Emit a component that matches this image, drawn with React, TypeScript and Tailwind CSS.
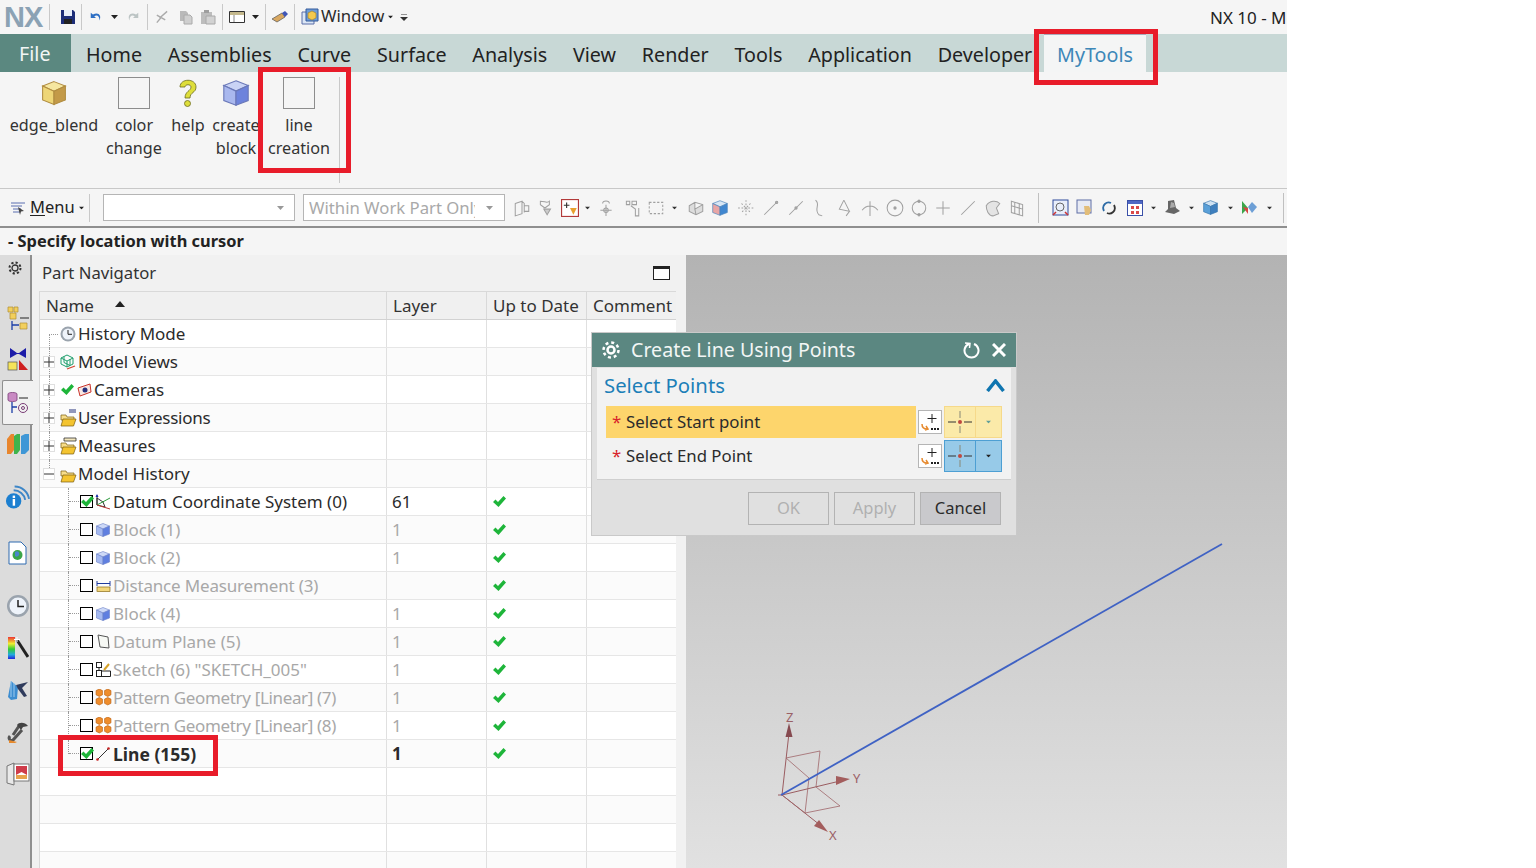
import React from "react";

const font = { fontFamily: '"Noto Sans","Open Sans",sans-serif' };

function Cube({ top = "#c9d3f5", left = "#a9b8ee", right = "#6d83dc", stroke = "#6a78b8", size = 16 }: any) {
  return (
    <svg width={size} height={size} viewBox="0 0 16 16" className="shrink-0">
      <path d="M8 1.5 14.5 4 8 7 1.5 4Z" fill={top} stroke={stroke} strokeWidth=".6" />
      <path d="M1.5 4 8 7v7.5L1.5 12Z" fill={left} stroke={stroke} strokeWidth=".6" />
      <path d="M14.5 4 8 7v7.5l6.500-2.500Z" fill={right} stroke={stroke} strokeWidth=".6" />
    </svg>
  );
}

function Caret({ className = "", color = "#222" }: { className?: string; color?: string }) {
  return (
    <svg width="7" height="4" viewBox="0 0 7 4" className={"shrink-0 " + className}>
      <path d="M0 0h7L3.500 4Z" fill={color} />
    </svg>
  );
}

function QuickSep({ className = "" }: { className?: string }) {
  return <div className={"w-px h-[26px] bg-[#c9c9c9] shrink-0 " + className} />;
}

function TitleBar() {
  return (
    <div className="h-[34px] flex items-center pl-[4px] relative">
      <span className="text-[29px] font-bold text-[#8ba2b4] leading-none w-[45px] tracking-[-1px]" style={{ fontFamily: '"Liberation Sans",sans-serif' }}>NX</span>
      <QuickSep />
      <svg width="16" height="16" viewBox="0 0 16 16" className="ml-[10px] shrink-0">
        <path d="M1 1h12l2 2v12H1Z" fill="#1d2d78" />
        <path d="M4 1h8v6H4Z" fill="#e8eef8" />
        <path d="M4 10h8v5H4Z" fill="#222" />
      </svg>
      <QuickSep className="ml-[5px]" />
      <svg width="14" height="16" viewBox="0 0 16 16" className="ml-[7px] shrink-0">
        <path d="M2 3v6h6L6 7c3-2 6-.500 6 5 2.500-6-1-10-7.500-7Z" fill="#2d6fc4" />
      </svg>
      <Caret className="ml-[8px]" />
      <svg width="14" height="16" viewBox="0 0 16 16" className="ml-[8px] shrink-0">
        <path d="M14 3v6H8l2-2c-3-2-6-.500-6 5-2.500-6 1-10 7.500-7Z" fill="#bcc4c4" />
      </svg>
      <QuickSep className="ml-[7px]" />
      <svg width="15" height="16" viewBox="0 0 16 16" className="ml-[6px] shrink-0">
        <path d="M14 2 6 9M3 14 8 8M3 6l9 5" stroke="#aaa" strokeWidth="1.500" fill="none" />
      </svg>
      <svg width="15" height="15" viewBox="0 0 15 15" className="ml-[9px] shrink-0">
        <path d="M2 1h6l2 2v8H2Z" fill="#b9b9b9" />
        <path d="M6 5h6l2 2v7H6Z" fill="#cfcfcf" stroke="#aaa" />
      </svg>
      <svg width="16" height="16" viewBox="0 0 16 16" className="ml-[7px] shrink-0">
        <path d="M1 3h11v12H1Z" fill="#bdbdbd" />
        <path d="M4 1h5v3H4Z" fill="#9e9e9e" />
        <path d="M6 7h9v8H6Z" fill="#d2d2d2" stroke="#a8a8a8" />
      </svg>
      <QuickSep className="ml-[6px]" />
      <svg width="16" height="14" viewBox="0 0 16 14" className="ml-[6px] shrink-0">
        <path d="M.500 1.500h15v11H.500Z" fill="#fff" stroke="#333" />
        <path d="M1 2h14v3H1Z" fill="#c5b98d" />
        <path d="M5 5v7" stroke="#888" />
      </svg>
      <Caret className="ml-[7px]" />
      <QuickSep className="ml-[6px]" />
      <svg width="18" height="14" viewBox="0 0 18 14" className="ml-[5px] shrink-0">
        <path d="M1 9 11 3l3 4-8 5Z" fill="#d9a860" stroke="#555" strokeWidth=".7" />
        <path d="M11 3l3-2 3 3-3 3Z" fill="#3f55b5" />
      </svg>
      <QuickSep className="ml-[5px]" />
      <svg width="18" height="20" viewBox="0 0 18 20" className="ml-[6px] shrink-0">
        <path d="M1 5h12v12H1Z" fill="#dbe6f5" stroke="#5a6fa8" />
        <path d="M5 2h12v12H5Z" fill="#6d9cd8" stroke="#345a9a" />
        <path d="M7 6l4-2 4 2v5l-4 2-4-2Z" fill="#f3c94e" stroke="#a07c20" strokeWidth=".6" />
      </svg>
      <span className="text-[16.700px] text-[#2b2b2b] ml-[2px] leading-none pb-[2px]">Window</span>
      <Caret className="ml-[3px] scale-75" />
      <svg width="8" height="7" viewBox="0 0 8 7" className="ml-[6px]">
        <path d="M1 0h6" stroke="#333" />
        <path d="M0 3h8L4 7Z" fill="#333" />
      </svg>
      <span className="absolute left-[1210px] top-[5px] text-[17px] text-[#222] w-[77px] overflow-hidden whitespace-nowrap">NX 10 - Modeling</span>
    </div>
  );
}

const tabs = ["Home", "Assemblies", "Curve", "Surface", "Analysis", "View", "Render", "Tools", "Application", "Developer"];

function TabBar() {
  return (
    <div className="h-[38px] bg-[#c8d8d6] flex items-stretch">
      <div className="w-[71px] bg-[#5b8880] text-[#f2f6f5] text-[19.700px] flex items-center pl-[19px] pt-[1px]">File</div>
      <div className="w-[973px] flex gap-[25.800px] pl-[15px] text-[19.700px] text-[#222] items-center pt-[3px] whitespace-nowrap">
        {tabs.map((t) => (
          <span key={t} className="leading-none">{t}</span>
        ))}
      </div>
      <div className="w-[102px] bg-[#f4f5f5] border-t border-[#aab] text-[#3d87b8] text-[19.700px] flex items-center justify-center pt-[2px]">MyTools</div>
    </div>
  );
}

function RibbonItem({ w, icon, lines }: { w: number; icon: React.ReactNode; lines: string[] }) {
  return (
    <div className="flex flex-col items-center shrink-0" style={{ width: w }}>
      <div className="h-[32px] flex items-center justify-center mt-[5px]">{icon}</div>
      <div className="text-[16.200px] leading-[23px] text-[#333] mt-[5px] text-center whitespace-nowrap">
        {lines.map((l) => (
          <div key={l}>{l}</div>
        ))}
      </div>
    </div>
  );
}

function EmptyIcon() {
  return <div className="w-[32px] h-[32px] border border-[#8d8d8d] bg-[#f5f5f5]" />;
}

function Ribbon() {
  return (
    <div className="h-[117px] flex pl-[8px] relative border-b border-[#c8c8c8]">
      <RibbonItem w={92} lines={["edge_blend"]} icon={<Cube size={28} top="#f6e7a0" left="#eed677" right="#c39a48" stroke="#b08c40" />} />
      <RibbonItem w={68} lines={["color", "change"]} icon={<EmptyIcon />} />
      <RibbonItem w={40} lines={["help"]} icon={
        <svg width="20" height="30" viewBox="0 0 20 30">
          <path d="M2 9C2 0 18 0 18 9c0 6-6 5-6 11H7c0-7 6-7 6-11 0-3-6-3-6 0Z" fill="#dede3a" stroke="#6b6b20" strokeWidth=".8" />
          <circle cx="9.500" cy="25.500" r="3" fill="#dede3a" stroke="#6b6b20" strokeWidth=".8" />
        </svg>
      } />
      <RibbonItem w={56} lines={["create", "block"]} icon={<Cube size={30} />} />
      <div className="w-[5px]" />
      <RibbonItem w={60} lines={["line", "creation"]} icon={<EmptyIcon />} />
      <div className="w-px h-[106px] bg-[#c9c9c9] mt-[5px] ml-[10px]" />
    </div>
  );
}

function G({ children, w = 24 }: { children: React.ReactNode; w?: number }) {
  return (
    <div className="shrink-0 flex justify-center items-center" style={{ width: w }}>
      <svg width="18" height="18" viewBox="0 0 16 16" fill="none" stroke="#a0a0a0" strokeWidth=".9" className="shrink-0">{children}</svg>
    </div>
  );
}

function Drop({ w = 14 }: { w?: number }) {
  return (
    <div className="shrink-0 flex justify-center" style={{ width: w }}>
      <Caret color="#333" className="scale-75" />
    </div>
  );
}

function Toolbar() {
  return (
    <div className="h-[39px] flex items-center border-b-2 border-[#8f8f8f]">
      <div className="flex items-center w-[89px] pl-[10px]">
        <svg width="16" height="16" viewBox="0 0 16 16">
          <path d="M1 3h14M1 6h11M3 9h8M3 12h7" stroke="#5a6fb0" />
          <path d="M8 7l6 4-3 .500L10 15Z" fill="#444" />
        </svg>
        <span className="text-[16.500px] ml-[4px] text-[#222]"><span className="underline underline-offset-2">M</span>enu</span>
        <Caret className="ml-[3px] scale-75" />
      </div>
      <div className="w-px h-[28px] bg-[#c9c9c9]" />
      <div className="ml-[13px] w-[192px] h-[27px] border border-[#b5b5b5] bg-white flex items-center justify-end pr-[10px]">
        <Caret color="#999" />
      </div>
      <div className="ml-[8px] w-[202px] h-[27px] border border-[#b5b5b5] bg-white flex items-center pl-[5px] pr-[11px]">
        <span className="text-[16.700px] text-[#a9a9a9] w-[166px] overflow-hidden whitespace-nowrap">Within Work Part Only</span>
        <Caret color="#999" className="ml-auto" />
      </div>
      <div className="flex items-center ml-[5px]">
        <G w={24}><path d="M2 4l6-2v11l-6 2ZM8 2l2 2v8M10 6h4v5h-4" /></G>
        <G w={24}><path d="M3 2c4 0 6 2 8 0v3l-4 3-4-3Z" /><path d="M6 9h6l-3 5Z" fill="#ccc" /></G>
        <div className="w-[24px] flex justify-center">
          <svg width="18" height="18" viewBox="0 0 16 16">
            <rect x=".5" y=".5" width="15" height="15" fill="#fff" stroke="#b23a3a" />
            <path d="M5 3v5M2.500 5.500h5" stroke="#333" />
            <path d="M8 8h6l-3 6Z" fill="#e9a12f" />
          </svg>
        </div>
        <Drop w={10} />
        <G w={28}><path d="M8 5v10M3 10h10M5 4c0-3 6-3 6 0" /><circle cx="8" cy="10" r="2" /></G>
        <G w={24}><path d="M3 2h3v3H3ZM8 2h4v3H8ZM7 6l4 3v6h3V8" /></G>
        <G w={24}><path d="M2 3h12v10H2Z" strokeDasharray="2 1.500" /></G>
        <Drop w={12} />
        <G w={32}><path d="M2 6l5-3 7 2v6l-6 3-6-3ZM7 3v6l7-4M7 9l1 5" fill="#ddd" /></G>
        <div className="w-[16px] flex justify-center"><Cube size={18} top="#d8e6f4" left="#e8a5a5" right="#3f86cf" stroke="#4b83bb" /></div>
        <G w={36}><path d="M8 1v14M1 8h14" strokeDasharray="1.500 1.500" /><path d="M4 4l8 8M12 4l-8 8" strokeDasharray="1.500 1.500" /></G>
        <G w={14}><path d="M2 14 14 2" /><circle cx="13" cy="3" r="1" fill="#aaa" /></G>
        <G w={36}><path d="M2 14 14 2" /><circle cx="8" cy="8" r="1" fill="#aaa" /></G>
        <G w={12}><path d="M4 1c5 4-2 8 3 13l3 1" /></G>
        <G w={38}><path d="M7 1 3 9l9 2-3 4M7 1l5 10" /></G>
        <G w={12}><path d="M8 2v13M1 10c4-5 10-5 14 0" /></G>
        <G w={38}><circle cx="8" cy="8" r="7" /><circle cx="8" cy="8" r="1" fill="#999" /></G>
        <G w={10}><circle cx="8" cy="8" r="6" /><circle cx="8" cy="2" r="1" fill="#999" /><circle cx="8" cy="14" r="1" fill="#999" /></G>
        <G w={38}><path d="M8 2v12M2 8h12" /></G>
        <G w={12}><path d="M2 14 14 2" /></G>
        <G w={38}><path d="M2 6c3-5 9-5 12-2l-3 4 2 5-5 2c-4 0-6-5-6-9Z" fill="#e4e4e4" /></G>
        <G w={10}><path d="M3 2l10 3v10L3 12ZM6 3v10M10 4v10M3 6l10 3" /></G>
      </div>
      <div className="w-px h-[30px] bg-[#c0c0c0] ml-[16px]" />
      <div className="flex items-center ml-[8px] pl-[1px]">
        <div className="w-[24px] flex justify-center">
          <svg width="17" height="17" viewBox="0 0 17 17">
            <rect x="1" y="1" width="15" height="15" fill="#e8eefb" stroke="#2e4a9c" />
            <circle cx="8" cy="8" r="4" fill="none" stroke="#666" />
            <path d="M1 16l3-3M16 16l-3-3" stroke="#c33" strokeWidth="1.500" />
          </svg>
        </div>
        <div className="w-[24px] flex justify-center">
          <svg width="17" height="17" viewBox="0 0 17 17">
            <rect x="1" y="1" width="14" height="13" fill="#e7eaf4" stroke="#5f6ea5" />
            <path d="M8 7h5l2 4-2 5H9Z" fill="#e2bd79" />
          </svg>
        </div>
        <div className="w-[26px] flex justify-center">
          <svg width="16" height="16" viewBox="0 0 16 16" fill="none" strokeWidth="1.800">
            <path d="M3 11c-3-6 3-10 7-8" stroke="#2d6ba6" />
            <path d="M13 5c3 6-3 10-7 8" stroke="#333" />
          </svg>
        </div>
        <div className="w-[26px] flex justify-center">
          <svg width="16" height="16" viewBox="0 0 16 16">
            <rect x=".5" y=".5" width="15" height="15" fill="#fff" stroke="#3a50a8" />
            <path d="M1 1h14v3H1Z" fill="#4f68c4" />
            <path d="M4 6h3v3H4ZM9 6h3v3H9ZM4 11h3v3H4ZM9 11h3v3H9Z" fill="#d94a4a" />
          </svg>
        </div>
        <Drop w={10} />
        <div className="w-[29px] flex justify-center">
          <svg width="17" height="17" viewBox="0 0 17 17">
            <path d="M4 2 10 1l2 8 4 3-6 3-9-2 3-3Z" fill="#666" />
            <path d="M7 3l3 1 1 4-5 1Z" fill="#aaa" />
          </svg>
        </div>
        <Drop w={8} />
        <div className="w-[31px] flex justify-center"><Cube top="#cfe2f2" left="#5aa0d8" right="#3e7fbe" stroke="#3674ab" size={17} /></div>
        <Drop w={8} />
        <div className="w-[31px] flex justify-center">
          <svg width="17" height="15" viewBox="0 0 17 15">
            <path d="M1 1v13l6-6Z" fill="#3ba64a" />
            <path d="M2 7l5 7V8Z" fill="#d64545" />
            <path d="M11 2 16 7l-5 6-4-6Z" fill="#6d9fd6" />
          </svg>
        </div>
        <Drop w={8} />
      </div>
      <div className="w-px h-[30px] bg-[#c0c0c0] ml-[10px]" />
    </div>
  );
}

function Slot({ h, children, sel }: { h: number; children: React.ReactNode; sel?: boolean }) {
  return (
    <div
      className={sel
        ? "w-[31px] ml-[2px] -mr-px bg-[#f1f1f1] border border-r-0 border-[#8f8f8f] rounded-l-[2px] flex items-center justify-center shrink-0 relative z-10"
        : "flex items-center justify-center shrink-0 pl-[5px]"}
      style={{ height: h }}
    >
      {children}
    </div>
  );
}

function Rail() {
  return (
    <div className="w-[32px] shrink-0 bg-[#dcdcdc] border-r-[2px] border-[#8f8f8f] flex flex-col">
      <div className="h-[26px] flex items-center justify-center shrink-0">
        <svg width="14" height="14" viewBox="0 0 14 14" fill="none" stroke="#333" strokeWidth="1.300">
          <circle cx="7" cy="7" r="3" />
          <circle cx="7" cy="7" r="5.500" strokeDasharray="2.200 2.100" strokeWidth="2" />
        </svg>
      </div>
      <div className="h-[15px] shrink-0" />
      <Slot h={44}>
        <svg width="24" height="26" viewBox="0 0 24 26">
          <path d="M2 2h5v5H2ZM8 2h4v5H8ZM4 8h6v6H4Z" fill="#f2cf5c" stroke="#b08c30" strokeWidth=".7" />
          <path d="M6 16v9M6 20h7" stroke="#1d3fa8" strokeWidth="1.300" />
          <path d="M14 18h7v6h-7Z" fill="#f2cf5c" stroke="#b08c30" strokeWidth=".7" />
          <path d="M14 13h9" stroke="#222" />
        </svg>
      </Slot>
      <Slot h={40}>
        <svg width="22" height="24" viewBox="0 0 22 24">
          <path d="M3 0l7 5 2 0 7-5v10l-7-4h-2l-7 4Z" fill="#1c1ca8" />
          <rect x="1" y="14" width="9" height="8" fill="#f5e45a" stroke="#555" strokeWidth=".7" />
          <path d="M12 22V12l9 10Z" fill="#cf1f1f" />
        </svg>
      </Slot>
      <Slot h={45} sel>
        <svg width="22" height="24" viewBox="0 0 22 24" fill="none">
          <path d="M1 3c0-2 9-2 9 0v6c0 2-9 2-9 0Z" fill="#c98ac3" stroke="#7a3d77" strokeWidth=".8" />
          <path d="M5 11v11M5 16h5" stroke="#1d3fa8" strokeWidth="1.300" />
          <circle cx="16" cy="17" r="4.500" stroke="#7a3d77" />
          <circle cx="16" cy="17" r="1.500" stroke="#7a3d77" />
          <path d="M12 7h9" stroke="#222" />
        </svg>
      </Slot>
      <Slot h={38}>
        <svg width="24" height="22" viewBox="0 0 24 22">
          <path d="M1 6 5 1h3v16l-3 4H1Z" fill="#e8862e" />
          <path d="M8 3l3-2h3v16l-3 4H8Z" fill="#3fb44c" />
          <path d="M15 3l4-2h4v16l-4 4h-4Z" fill="#3f97d6" />
        </svg>
      </Slot>
      <Slot h={70}>
        <svg width="26" height="26" viewBox="0 0 26 26">
          <circle cx="9" cy="16" r="8" fill="#1c7fd0" />
          <rect x="8" y="14" width="2.500" height="7" fill="#fff" />
          <rect x="8" y="10.500" width="2.500" height="2.500" fill="#fff" />
          <path d="M9 5c6 0 11 4 12 10M10 1c8 0 14 6 15 13" stroke="#3d86c7" strokeWidth="2" fill="none" />
        </svg>
      </Slot>
      <Slot h={40}>
        <svg width="20" height="24" viewBox="0 0 20 24">
          <path d="M1 1h12l5 5v17H1Z" fill="#fff" stroke="#2e6bb0" />
          <circle cx="9.500" cy="14" r="5" fill="#3aa548" />
          <path d="M7 11c3-2 5 1 4 3s-3 2-4 1" fill="#4a86cc" />
        </svg>
      </Slot>
      <div className="h-[12px] shrink-0" />
      <Slot h={42}>
        <svg width="24" height="24" viewBox="0 0 24 24">
          <circle cx="12" cy="12" r="11" fill="#9aa3ad" />
          <circle cx="12" cy="12" r="8.500" fill="#eef3fa" />
          <path d="M12 6v6.500h6" stroke="#222" strokeWidth="1.500" fill="none" />
        </svg>
      </Slot>
      <Slot h={42}>
        <svg width="22" height="24" viewBox="0 0 22 24">
          <defs>
            <linearGradient id="rb" x1="0" x2="0" y1="0" y2="1">
              <stop offset="0" stopColor="#e33" />
              <stop offset=".3" stopColor="#ee3" />
              <stop offset=".55" stopColor="#3c3" />
              <stop offset=".8" stopColor="#2ad" />
              <stop offset="1" stopColor="#22d" />
            </linearGradient>
          </defs>
          <rect x="1" y="1" width="7" height="22" fill="url(#rb)" />
          <path d="M10 4 21 21" stroke="#222" strokeWidth="3" />
          <path d="M10 1v5M7 3.500h6" stroke="#fff" />
        </svg>
      </Slot>
      <Slot h={42}>
        <svg width="24" height="22" viewBox="0 0 24 22">
          <path d="M5 2 2 18l3 3 6-1 1-12Z" fill="#3d8dd0" />
          <path d="M5 2v16M8 4v14" stroke="#9ecbef" />
          <path d="M10 6l12-3-6 6 5 8-3 1-6-8Z" fill="#2f3b5c" />
        </svg>
      </Slot>
      <Slot h={42}>
        <svg width="22" height="24" viewBox="0 0 22 24">
          <path d="M12 6l-6 9M3 16c-2 2 0 6 3 4l9-10" stroke="#555" strokeWidth="3" fill="none" />
          <path d="M10 5c2-3 8-3 11 1l-5 1-2 3Z" fill="#444" />
          <path d="M2 20l8 2-2 1H2Z" fill="#e68a2e" />
        </svg>
      </Slot>
      <Slot h={42}>
        <svg width="24" height="24" viewBox="0 0 24 24">
          <path d="M1 4l7-3v22l-7-2Z" fill="#e9e9e9" stroke="#777" />
          <rect x="8" y="2" width="15" height="17" fill="#fff" stroke="#777" />
          <path d="M10 4h11v9l-5.500-3L10 13Z" fill="#cf3c4a" />
          <path d="M10 13h11v4H10Z" fill="#e7a24c" />
        </svg>
      </Slot>
    </div>
  );
}

function Check({ className = "" }: { className?: string }) {
  return (
    <svg width="13" height="13" viewBox="0 0 13 13" className={"shrink-0 " + className}>
      <path d="M0 7l2.500-2.500 2.500 2.500L10.500 1 13 3.500l-7.500 8.500Z" fill="#1eb53a" />
    </svg>
  );
}

function CheckBox({ on }: { on?: boolean }) {
  return (
    <div className="w-[13px] h-[13px] border border-black bg-white shrink-0 relative">
      {on && <Check className="absolute left-0 top-[-1px]" />}
    </div>
  );
}

const Folder = ({ top }: { top?: "lines" | "ruler" }) => (
  <svg width="17" height="18" viewBox="0 0 17 18" className="shrink-0">
    {top === "lines" && <path d="M9 1h7M9 3h7" stroke="#26327d" />}
    {top === "ruler" && <path d="M4 1h12v3H4Z" fill="#f3e7bd" stroke="#333" strokeWidth=".8" />}
    <path d="M1 6h5l1 2h7v3H1Z" fill="#f7dd8a" stroke="#7a5b10" strokeWidth=".7" />
    <path d="M1 17 3 10h13l-2.500 7Z" fill="#f4c430" stroke="#7a5b10" strokeWidth=".7" />
  </svg>
);

const BlockIco = () => <Cube size={16} top="#cdd9f7" left="#a5b9f0" right="#5f7fe0" stroke="#6a7fc8" />;

const Orange = () => (
  <svg width="17" height="17" viewBox="0 0 16 16" className="shrink-0">
    {[[1, 0], [9, 0], [1, 8], [9, 8]].map(([x, y], i) => (
      <path key={i} d={`M${x + 3} ${y}l3 1.500v4l-3 1.500-3-1.500v-4Z`} fill="#ef8d2c" stroke="#b85e10" strokeWidth=".6" />
    ))}
  </svg>
);

const CoordIco = () => (
  <svg width="18" height="16" viewBox="0 0 18 16" fill="none" className="shrink-0">
    <path d="M3 1v10M3 4l6 4 2 5-8-2Z" stroke="#333" />
    <path d="M3 11 16 4" stroke="#2a9a3a" />
    <path d="M3 11l13 4" stroke="#b33" />
    <path d="M3 0l1.500 3h-3Z" fill="#1b2fb0" />
  </svg>
);

const ClockIco = () => (
  <svg width="16" height="16" viewBox="0 0 16 16" className="shrink-0">
    <circle cx="8" cy="8" r="7.500" fill="#9aa3ad" />
    <circle cx="8" cy="8" r="5.500" fill="#eef3fa" />
    <path d="M8 4v4.300h4" stroke="#222" fill="none" />
  </svg>
);

const ViewsIco = () => (
  <svg width="16" height="16" viewBox="0 0 16 16" fill="none" className="shrink-0">
    <path d="M7 1l6 3v6l-6 3-6-3V4Z M1 4l6 3 6-3M7 7v6M4 2.500v6l6 3V5" stroke="#1e9e6c" />
    <path d="M7 15l8-3" stroke="#d2452f" strokeWidth="1.300" />
  </svg>
);

const CamIco = () => (
  <svg width="15" height="14" viewBox="0 0 15 14" fill="none" className="shrink-0">
    <path d="M1 5 13 1l1 8-11 4Z" fill="#f9e8e4" stroke="#c9332a" />
    <circle cx="8" cy="7" r="2.500" fill="#26327d" />
  </svg>
);

const MeasureIco = () => (
  <svg width="15" height="12" viewBox="0 0 15 12" fill="none" className="shrink-0">
    <path d="M1 1v5M14 1v5M1 3.500h13" stroke="#1f3b9e" />
    <rect x="1" y="7" width="13" height="4.500" fill="#f3d77c" stroke="#8b6b18" strokeWidth=".7" />
  </svg>
);

const PlaneIco = () => (
  <svg width="13" height="15" viewBox="0 0 13 15" className="shrink-0">
    <path d="M1 1l10 2 1 11-9-1Z" fill="#f7f9f5" stroke="#555" />
  </svg>
);

const SketchIco = () => (
  <svg width="15" height="15" viewBox="0 0 15 15" fill="none" className="shrink-0">
    <rect x=".5" y=".5" width="5" height="5" stroke="#222" />
    <rect x=".5" y="8.500" width="5" height="6" stroke="#222" />
    <path d="M5.500 9h9v5.500h-9M3 5.500v3" stroke="#222" />
    <path d="M8 8l5-6" stroke="#d7a32a" strokeWidth="2" />
  </svg>
);

const LineIco = () => (
  <svg width="14" height="14" viewBox="0 0 14 14" className="shrink-0">
    <path d="M1 13 13 1" stroke="#333" />
    <circle cx="1.500" cy="12.500" r="1.300" fill="#c62020" />
    <circle cx="12.500" cy="1.500" r="1.300" fill="#c62020" />
  </svg>
);

type Row = {
  label?: string;
  labelClass?: string;
  expander?: "+" | "-";
  check?: boolean;
  box?: boolean | null;
  icon?: React.ReactNode;
  layer?: string;
  ok?: boolean;
  dim?: boolean;
  bold?: boolean;
  child?: boolean;
  last?: boolean;
};

const rows: Row[] = [
  { label: "History Mode", icon: <ClockIco /> },
  { label: "Model Views", expander: "+", icon: <ViewsIco /> },
  { label: "Cameras", expander: "+", check: true, icon: <CamIco /> },
  { label: "User Expressions", labelClass: "tracking-[-0.25px]", expander: "+", icon: <Folder top="lines" /> },
  { label: "Measures", expander: "+", icon: <Folder top="ruler" /> },
  { label: "Model History", expander: "-", icon: <Folder /> },
  { label: "Datum Coordinate System (0)", child: true, box: true, icon: <CoordIco />, layer: "61", ok: true },
  { label: "Block (1)", child: true, box: false, icon: <BlockIco />, layer: "1", ok: true, dim: true },
  { label: "Block (2)", child: true, box: false, icon: <BlockIco />, layer: "1", ok: true, dim: true },
  { label: "Distance Measurement (3)", labelClass: "tracking-[-0.17px]", child: true, box: false, icon: <MeasureIco />, ok: true, dim: true },
  { label: "Block (4)", child: true, box: false, icon: <BlockIco />, layer: "1", ok: true, dim: true },
  { label: "Datum Plane (5)", child: true, box: false, icon: <PlaneIco />, layer: "1", ok: true, dim: true },
  { label: 'Sketch (6) "SKETCH_005"', child: true, box: false, icon: <SketchIco />, layer: "1", ok: true, dim: true },
  { label: "Pattern Geometry [Linear] (7)", labelClass: "tracking-[-0.35px]", child: true, box: false, icon: <Orange />, layer: "1", ok: true, dim: true },
  { label: "Pattern Geometry [Linear] (8)", labelClass: "tracking-[-0.35px]", child: true, box: false, icon: <Orange />, layer: "1", ok: true, dim: true },
  { label: "Line (155)", child: true, box: true, icon: <LineIco />, layer: "1", ok: true, bold: true, last: true },
  {},
  {},
  {},
  {},
];

function TreeRow({ r, index }: { r: Row; index: number }) {
  const color = r.dim ? "text-[#a8a8a8]" : "text-[#2b2b2b]";
  const odd = index % 2 === 1;
  const weight = r.bold ? " font-bold" : "";
  return (
    <div className={"h-[28px] flex border-b border-[#e6e6e6] shrink-0 " + (odd ? "bg-[#fbfbfb]" : "bg-white")}>
      <div className={"w-[347px] border-r border-[#e0e0e0] flex items-center relative whitespace-nowrap " + color + weight + (r.bold ? " text-[17.500px]" : " text-[17px]")}>
        {r.label && !r.child && index < 6 && (
          <span className={"absolute left-[9px] w-px border-l border-dotted border-[#999] " + (index === 0 ? "top-[14px] bottom-[-1px]" : index === 5 ? "top-0 h-[14px]" : "top-0 bottom-[-1px]")} />
        )}
        {r.child && (
          <span className={"absolute left-[28px] w-px border-l border-dotted border-[#999] top-0 " + (r.last ? "h-[14px]" : "bottom-[-1px]")} />
        )}
        {r.child && <span className="absolute left-[29px] w-[10px] top-[13px] border-t border-dotted border-[#999]" />}
        {index === 0 && <span className="absolute left-[9px] w-[9px] top-[14px] border-t border-dotted border-[#999]" />}
        {r.expander && (
          <div className="absolute left-[3px] top-[8px] w-[12px] h-[12px] bg-white border border-[#e0e0e0] flex items-center justify-center">
            <svg width="10" height="10" viewBox="0 0 10 10">
              <path d={r.expander === "+" ? "M0 5h10M5 0v10" : "M0 5h10"} stroke="#333" />
            </svg>
          </div>
        )}
        {r.child ? (
          <div className="flex items-center pl-[40px]">
            <CheckBox on={r.box === true} />
            <div className="w-[18px] ml-[1px] flex justify-center">{r.icon}</div>
            <span className={"ml-[1px] pt-[1px] " + (r.labelClass || "")}>{r.label}</span>
          </div>
        ) : r.label ? (
          <div className="flex items-center pl-[19px]">
            {r.check && <Check className="ml-[2px] mr-[1px]" />}
            <div className="w-[18px] flex justify-center">{r.icon}</div>
            <span className={"ml-[1px] pt-[1px] " + (r.labelClass || "")}>{r.label}</span>
          </div>
        ) : null}
      </div>
      <div className={"w-[100px] border-r border-[#e0e0e0] pl-[5px] pt-[1px] flex items-center text-[17px] " + color + weight}>{r.layer}</div>
      <div className="w-[100px] border-r border-[#e0e0e0] pl-[6px] flex items-center">{r.ok && <Check />}</div>
      <div className="flex-1" />
    </div>
  );
}

function Navigator() {
  return (
    <div className="w-[654px] shrink-0 bg-[#f1f1f1] flex flex-col pl-[7px] pr-[10px] overflow-hidden">
      <div className="h-[36px] shrink-0 flex items-center justify-between pl-[3px] pr-[6px]">
        <span className="text-[16.700px] text-[#333]">Part Navigator</span>
        <div className="w-[17px] h-[14px] border border-[#222] border-t-[3px] bg-white" />
      </div>
      <div className="flex-1 bg-white border-l border-t border-[#d9d9d9] flex flex-col overflow-hidden">
        <div className="h-[28px] shrink-0 flex bg-[#f0f0f0] border-b border-[#d2d2d2] text-[17px] text-[#333]">
          <div className="w-[347px] border-r border-[#d9d9d9] pl-[6px] flex items-center">
            <span>Name</span>
            <svg width="10" height="6" viewBox="0 0 10 6" className="ml-[21px] mb-[4px]"><path d="M0 6h10L5 0Z" fill="#222" /></svg>
          </div>
          <div className="w-[100px] border-r border-[#d9d9d9] pl-[6px] flex items-center">Layer</div>
          <div className="w-[100px] border-r border-[#d9d9d9] pl-[6px] flex items-center whitespace-nowrap">Up to Date</div>
          <div className="pl-[6px] flex items-center">Comment</div>
        </div>
        {rows.map((r, i) => (
          <TreeRow key={i} r={r} index={i} />
        ))}
      </div>
    </div>
  );
}

function Viewport() {
  return (
    <div className="w-[601px] shrink-0 relative overflow-hidden bg-gradient-to-b from-[#b3b3b3] to-[#e1e1e1]">
      <svg width="601" height="613" viewBox="686 255 601 613" className="absolute left-0 top-0">
        <path d="M778 795H782M782 795 789 733M782 795 840 781M782 795 820 825" stroke="#9a5c60" strokeWidth="1" fill="none" />
        <path d="M789 723l3.500 14h-7Z" fill="#864a50" />
        <path d="M850 779 836 776v9Z" fill="#a35d5d" />
        <path d="M828 832l-9-12-5 6Z" fill="#a35d5d" />
        <path d="M786 758 820 751 816 787M786 758 809 778 805 813 840 806 816 787M782 795 805 813" stroke="#a0666a" strokeWidth=".8" fill="none" />
        <path d="M781 795 1222 544" stroke="#3f62c4" strokeWidth="1.800" />
      </svg>
      <span className="absolute left-[100px] top-[455px] text-[13px] leading-[14px] text-[#9a6065]">Z</span>
      <span className="absolute left-[167px] top-[516px] text-[13px] leading-[14px] text-[#9a6065]">Y</span>
      <span className="absolute left-[143px] top-[573px] text-[13px] leading-[14px] text-[#9a6065]">X</span>
    </div>
  );
}

function Cross() {
  return (
    <svg width="28" height="22" viewBox="0 0 28 22">
      <path d="M14 0v7M14 15v7" stroke="#887" />
      <path d="M2 11h8M18 11h8" stroke="#333" />
      <circle cx="14" cy="11" r="2" fill="#c0483e" />
    </svg>
  );
}

function PointRow({ label, active }: { label: string; active?: boolean }) {
  return (
    <div className="flex h-[32px] items-stretch ml-[9px]">
      <div className={"w-[310px] flex items-center pl-[6px] text-[16.800px] text-[#2b2b2b] " + (active ? "bg-[#fdd56c]" : "")}>
        <span className="text-[#d8232a] w-[14px] leading-none">*</span>
        <span>{label}</span>
      </div>
      <div className="w-[24px] h-[24px] ml-[2px] mt-[4px] bg-white border border-[#b5b5b5] relative">
        <svg width="22" height="22" viewBox="0 0 22 22" className="absolute left-0 top-0">
          <path d="M13 3v9M8.500 7.500h9" stroke="#222" />
          <path d="M3 13c0 3 1 5 5 5M6 19l3-1-2-3" stroke="#e68a2e" strokeWidth="1.500" fill="none" />
          <path d="M12 17h2v2h-2ZM15 17h2v2h-2ZM18 17h2v2h-2Z" fill="#222" />
        </svg>
      </div>
      <div className={"ml-[2px] w-[58px] flex border " + (active ? "bg-[#fbeaa9] border-[#f6d98a]" : "bg-[#97cae8] border-[#4d9fd3]")}>
        <div className={"w-[31px] flex items-center justify-center border-r " + (active ? "border-[#f6d98a]" : "border-[#4d9fd3]")}><Cross /></div>
        <div className="flex-1 flex items-center justify-center">
          <Caret color={active ? "#5f9e9a" : "#222"} className="scale-75" />
        </div>
      </div>
    </div>
  );
}

function Btn({ label, on }: { label: string; on?: boolean }) {
  return (
    <div className={"w-[81px] h-[33px] border border-[#b3b3b3] flex items-center justify-center text-[16.500px] " + (on ? "bg-[#c9c9cc] text-[#2b2b2b]" : "text-[#b0b0b0]")}>
      {label}
    </div>
  );
}

function Dialog() {
  return (
    <div className="absolute left-[591px] top-[332px] w-[426px] h-[204px] bg-[#e0e0e0] border border-[#c9c9c9] flex flex-col">
      <div className="h-[34px] bg-[#5b8781] flex items-center pl-[9px] pr-[10px] pb-[1px] text-[#f2f6f5] text-[19.600px] shrink-0">
        <svg width="20" height="20" viewBox="0 0 20 20" fill="none" stroke="#fff">
          <circle cx="10" cy="10" r="3.500" strokeWidth="2.500" />
          <circle cx="10" cy="10" r="7.500" strokeWidth="2.500" strokeDasharray="3 2.890" />
        </svg>
        <span className="ml-[10px] leading-none">Create Line Using Points</span>
        <svg width="18" height="18" viewBox="0 0 18 18" fill="none" stroke="#fff" strokeWidth="2" className="ml-auto">
          <path d="M6 3a7 7 0 1 0 5 0" />
          <path d="M2 2l5 .500-.500 4.500" strokeWidth="1.500" />
        </svg>
        <svg width="14" height="14" viewBox="0 0 14 14" stroke="#fff" strokeWidth="3" className="ml-[11px]">
          <path d="M1 1l12 12M13 1 1 13" />
        </svg>
      </div>
      <div className="mx-[5px] mt-[1px] h-[112px] bg-[#f2f2f2] border-b border-[#cfcfcf] shrink-0">
        <div className="h-[38px] flex items-center justify-between pl-[7px] pr-[6px] pb-[3px]">
          <span className="text-[20.300px] text-[#1c7fb8] leading-none">Select Points</span>
          <svg width="19" height="13" viewBox="0 0 19 13" fill="none" stroke="#0f75b0" strokeWidth="3.500"><path d="M1.500 12 9.500 2l8 10" /></svg>
        </div>
        <PointRow label="Select Start point" active />
        <div className="h-[2px]" />
        <PointRow label="Select End Point" />
      </div>
      <div className="flex justify-end gap-[5px] pr-[15px] pt-[12px]">
        <Btn label="OK" />
        <Btn label="Apply" />
        <Btn label="Cancel" on />
      </div>
    </div>
  );
}

function RedBox({ className }: { className: string }) {
  return <div className={"absolute border-[5px] border-[#e81c2a] pointer-events-none " + className} />;
}

export default function App() {
  return (
    <div className="w-[1536px] h-[868px] bg-white overflow-hidden relative" style={font}>
      <div className="w-[1287px] h-full bg-[#f5f5f5] flex flex-col overflow-hidden">
        <TitleBar />
        <TabBar />
        <Ribbon />
        <Toolbar />
        <div className="h-[27px] shrink-0 flex items-center pl-[8px] text-[16.400px] font-bold text-[#222] whitespace-nowrap">- Specify location with cursor</div>
        <div className="flex flex-1 min-h-0">
          <Rail />
          <Navigator />
          <Viewport />
        </div>
      </div>
      <Dialog />
      <RedBox className="left-[258px] top-[67px] w-[93px] h-[106px]" />
      <RedBox className="left-[1034px] top-[29px] w-[124px] h-[56px]" />
      <RedBox className="left-[58px] top-[735px] w-[160px] h-[41px]" />
    </div>
  );
}
